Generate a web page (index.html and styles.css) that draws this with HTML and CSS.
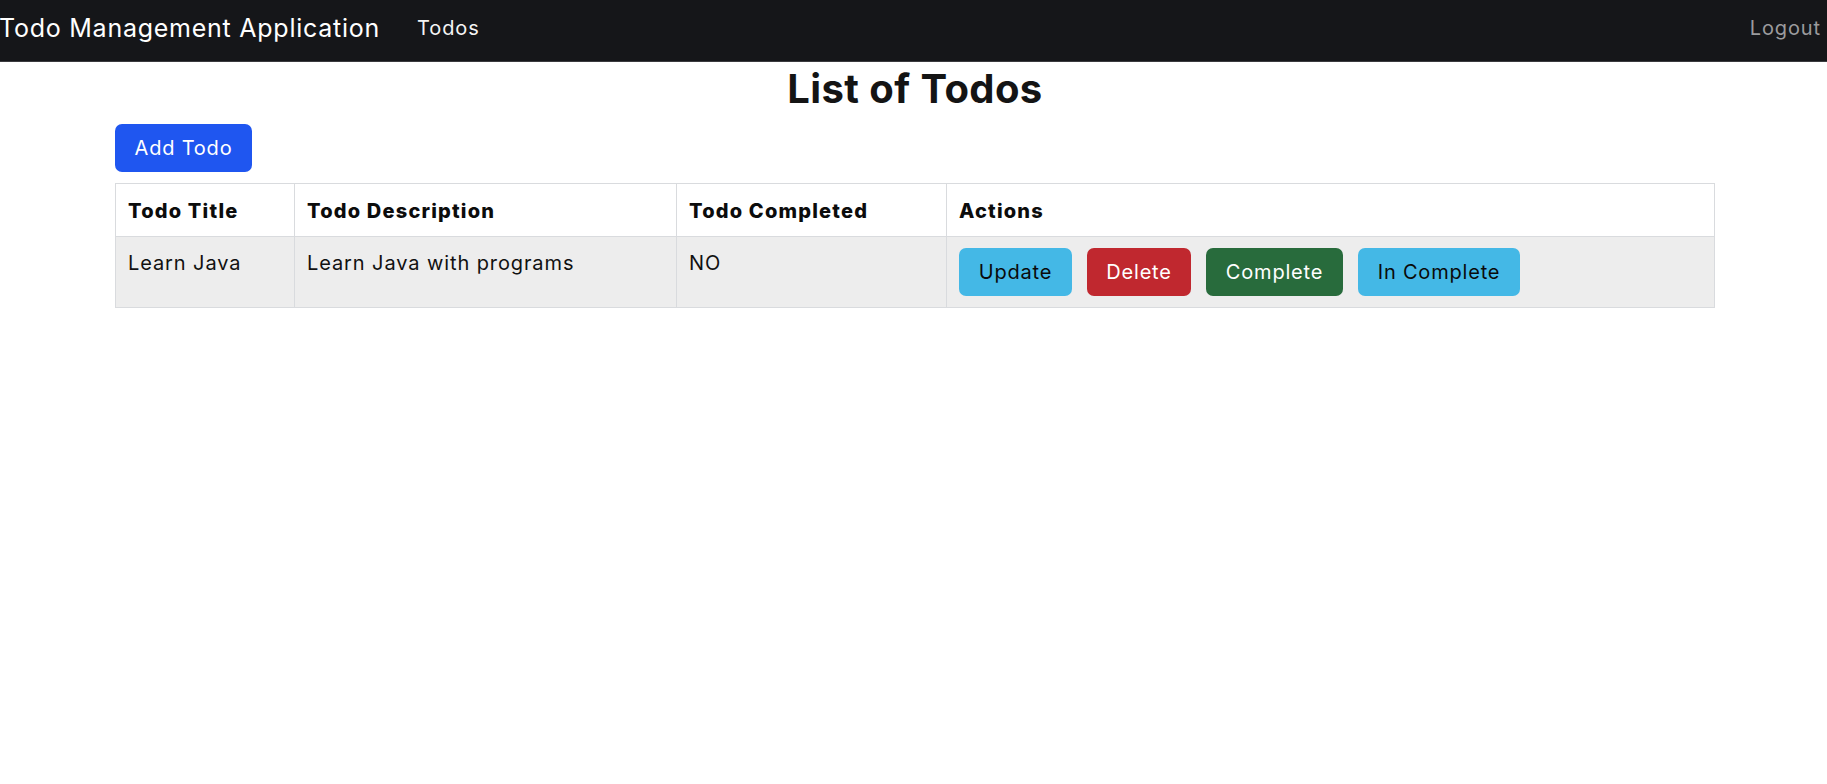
FILE: index.html
```html
<!DOCTYPE html>
<html lang="en">
<head>
<meta charset="utf-8">
<title>Todo Management Application</title>
<link rel="stylesheet" href="styles.css">
</head>
<body>
<header class="navbar">
  <a class="brand" href="#">Todo Management Application</a>
  <nav class="nav-links"><a class="nav-link" href="#">Todos</a></nav>
  <a class="nav-link logout" href="#">Logout</a>
</header>
<main class="container">
  <h2 class="page-title">List of Todos</h2>
  <div class="toolbar"><a class="btn btn-primary" href="#">Add Todo</a></div>
  <table class="todo-table">
    <thead>
      <tr>
        <th class="col-title">Todo Title</th>
        <th class="col-desc">Todo Description</th>
        <th class="col-done">Todo Completed</th>
        <th>Actions</th>
      </tr>
    </thead>
    <tbody>
      <tr>
        <td>Learn Java</td>
        <td>Learn Java with programs</td>
        <td>NO</td>
        <td>
          <div class="actions">
            <button class="btn btn-info btn-update">Update</button>
            <button class="btn btn-danger btn-delete">Delete</button>
            <button class="btn btn-success btn-complete">Complete</button>
            <button class="btn btn-info btn-incomplete">In Complete</button>
          </div>
        </td>
      </tr>
    </tbody>
  </table>
</main>
</body>
</html>
```

FILE: styles.css
```css
* { box-sizing: border-box; }
html, body { margin: 0; padding: 0; }
body {
  font-family: Inter, "Noto Sans", "Liberation Sans", sans-serif;
  color: #111;
  background: #fff;
  font-size: 20px;
  letter-spacing: 0.9px;
}
a { text-decoration: none; }

.navbar {
  display: flex;
  align-items: center;
  height: 62px;
  padding: 0 6px 5px 0;
  background: #151619;
  border-bottom: 1px solid #3a3b3e;
}
.brand {
  color: #fff;
  font-size: 25px;
  letter-spacing: 0.75px;
  margin-right: 27px;
  margin-left: -1px;
}
.nav-links { flex: 1; display: flex; }
.nav-link {
  color: #f4f4f4;
  font-size: 20px;
  padding: 0 10px;
}
.logout { color: #9b9b9d; padding-right: 0; }

.container {
  width: 1600px;
  margin: 0 112px 0 115px;
}
.page-title {
  margin: 3px 0 11px;
  text-align: center;
  font-size: 40px;
  line-height: 48px;
  font-weight: 700;
  letter-spacing: 0.4px;
  color: #141414;
}
.toolbar { display: flex; margin-bottom: 11px; }

.btn {
  display: inline-flex;
  align-items: center;
  justify-content: center;
  height: 48px;
  padding: 0;
  font-family: inherit;
  font-size: 20px;
  letter-spacing: 0.8px;
  border: 1px solid transparent;
  border-radius: 7px;
  cursor: pointer;
}
.btn-primary { background: #1f56f0; color: #fff; width: 137px; }
.btn-info { background: #44b8e6; color: #0a0a0a; }
.btn-danger { background: #c0282f; color: #fff; }
.btn-success { background: #286b3c; color: #fff; }
.btn-update { width: 113px; }
.btn-delete { width: 104px; }
.btn-complete { width: 137px; }
.btn-incomplete { width: 162px; }

.todo-table {
  width: 100%;
  border-collapse: collapse;
  border: 1px solid #d9dbde;
}
.todo-table th, .todo-table td {
  border: 1px solid #d9dbde;
  padding: 10px 12px;
  text-align: left;
  vertical-align: top;
  line-height: 30px;
  font-size: 20px;
}
.todo-table th {
  font-weight: 800;
  letter-spacing: 1.2px;
  color: #0c0c0c;
  padding-top: 12px;
  padding-bottom: 10px;
}
.todo-table tbody tr { background: #ededed; }
.todo-table td { padding-top: 11px; padding-bottom: 11px; color: #111; }
.col-title { width: 179px; }
.col-desc { width: 382px; }
.col-done { width: 270px; }
.actions { display: flex; gap: 15px; }
```
